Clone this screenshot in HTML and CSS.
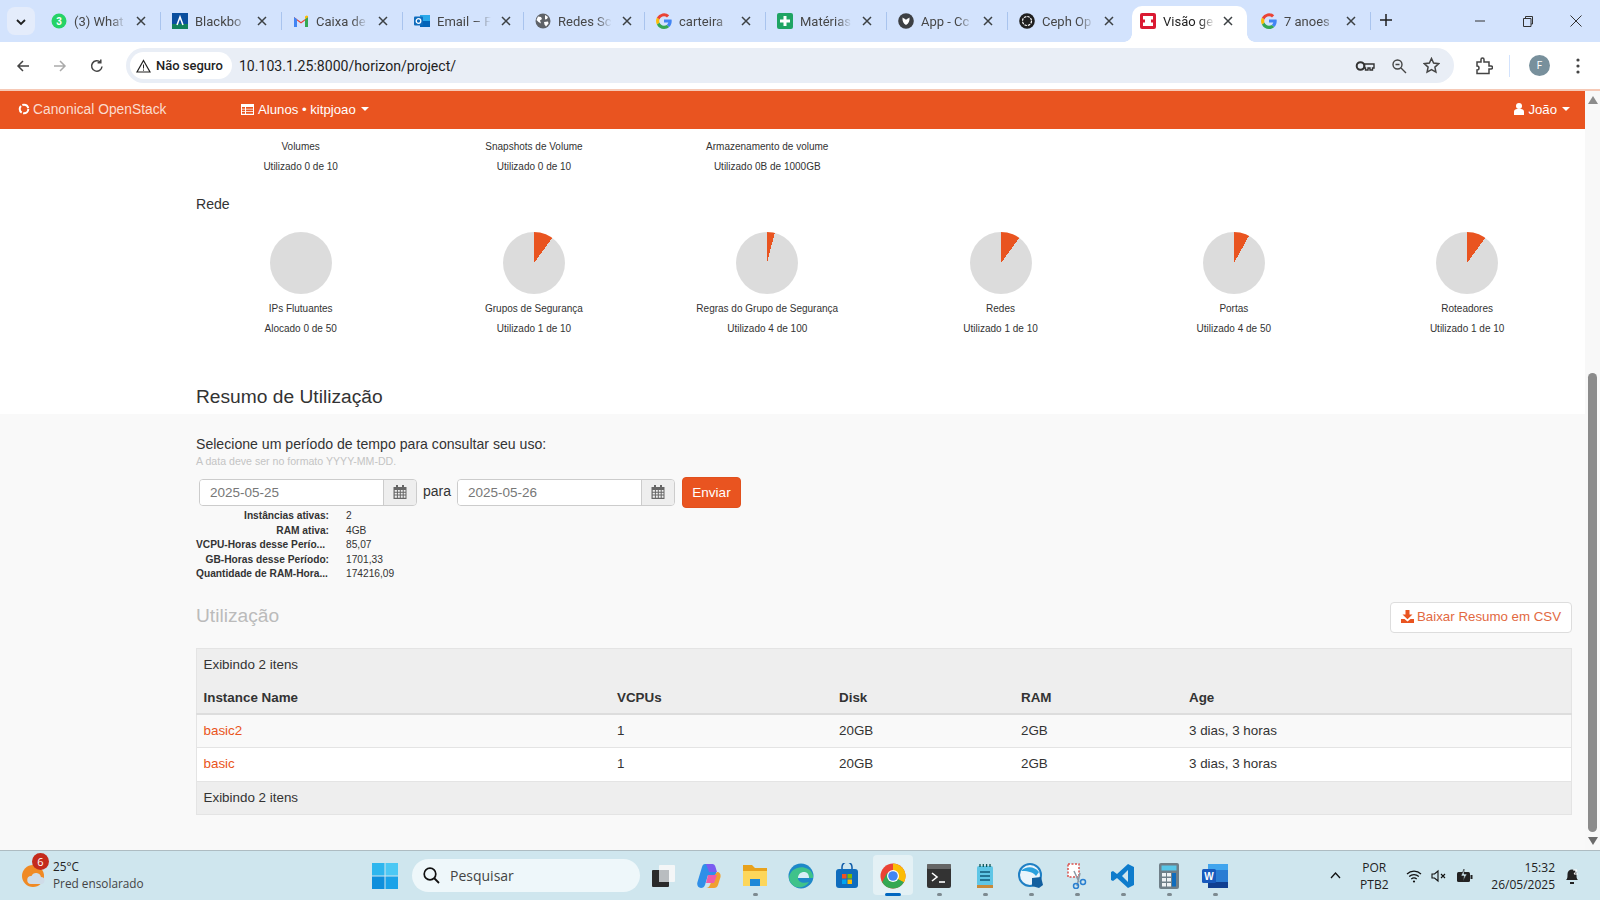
FILE: index.html
```html
<!DOCTYPE html>
<html lang="pt-BR">
<head>
<meta charset="UTF-8" />
<title>Visão geral - OpenStack Dashboard</title>
<link rel="stylesheet" href="styles.css">
</head>
<body>
<svg class="defs" width="0" height="0">
  <symbol id="i-close" viewBox="0 0 10 10"><path d="M1 1l8 8M9 1l-8 8" fill="none" stroke="#3c4043" stroke-width="1.5"/></symbol>
  <symbol id="i-cal" viewBox="0 0 14 14"><path fill="#666" d="M3 0h2v2h4V0h2v2h2.5v12H.5V2H3zM1.7 5v1.8h2.2V5zm3.2 0v1.8h1.9V5zm2.9 0v1.8h1.9V5zm2.9 0v1.8h1.8V5zM1.7 7.7v1.9h2.2V7.7zm3.2 0v1.9h1.9V7.7zm2.9 0v1.9h1.9V7.7zm2.9 0v1.9h1.8V7.7zM1.7 10.5v2.2h2.2v-2.2zm3.2 0v2.2h1.9v-2.2zm2.9 0v2.2h1.9v-2.2zm2.9 0v2.2h1.8v-2.2z"/></symbol>
  <symbol id="i-g" viewBox="0 0 16 16"><path fill="#4285f4" d="M15.7 8.2c0-.6 0-1.100-.2-1.600H8v3h4.300a3.700 3.700 0 0 1-1.600 2.400l2.500 2c1.500-1.400 2.500-3.400 2.500-5.800z"/><path fill="#34a853" d="M8 16c2.200 0 4-.7 5.200-2l-2.500-2c-.7.5-1.600.8-2.700.8-2.100 0-3.900-1.400-4.500-3.300L.9 11.500A8 8 0 0 0 8 16z"/><path fill="#fbbc05" d="M3.500 9.500a4.800 4.800 0 0 1 0-3L.9 4.500a8 8 0 0 0 0 7z"/><path fill="#ea4335" d="M8 3.200c1.200 0 2.200.4 3 1.200l2.200-2.200A8 8 0 0 0 .9 4.500l2.600 2C4.100 4.600 5.900 3.200 8 3.200z"/></symbol>
</svg>

<div class="window">
  <header class="tabstrip">
    <button class="tab-search"><svg width="10" height="7" viewBox="0 0 10 7"><path d="M1 1l4 4 4-4" fill="none" stroke="#1f1f1f" stroke-width="1.800"/></svg></button>
    <div class="tab">
      <svg class="fav" viewBox="0 0 16 16"><circle cx="8" cy="8" r="7.500" fill="#25d366"/><text x="8" y="11.500" class="fav-num">3</text></svg>
      <span class="tab-title">(3) What</span><svg class="tab-x"><use href="#i-close"/></svg>
    </div>
    <div class="tab">
      <svg class="fav" viewBox="0 0 16 16"><rect width="16" height="16" fill="#0a4f9e"/><path d="M0 11h16v5H0z" fill="#10805a"/><path d="M5 12l3-8 3 8" fill="none" stroke="#fff" stroke-width="1.500"/></svg>
      <span class="tab-title">Blackbo</span><svg class="tab-x"><use href="#i-close"/></svg>
    </div>
    <div class="tab">
      <svg class="fav" viewBox="0 0 16 16"><path d="M1 14V4l7 5 7-5v10h-3V7.500L8 10.500 4 7.500V14z" fill="#ea4335"/><path d="M1 14V4l3 2.300V14z" fill="#4285f4"/><path d="M15 14V4l-3 2.300V14z" fill="#34a853"/><path d="M12 6.300L15 4v-1l-1.500-.5L12 3.500z" fill="#fbbc05"/></svg>
      <span class="tab-title">Caixa de</span><svg class="tab-x"><use href="#i-close"/></svg>
    </div>
    <div class="tab">
      <svg class="fav" viewBox="0 0 16 16"><rect x="6" y="2" width="10" height="12" fill="#28a8ea"/><rect x="6" y="8" width="10" height="6" fill="#0364b8"/><rect y="3.500" width="9" height="9" rx="1" fill="#0f6cbd"/><circle cx="4.500" cy="8" r="2.300" fill="none" stroke="#fff" stroke-width="1.300"/></svg>
      <span class="tab-title">Email – F</span><svg class="tab-x"><use href="#i-close"/></svg>
    </div>
    <div class="tab">
      <svg class="fav" viewBox="0 0 16 16"><circle cx="8" cy="8" r="7.500" fill="#5f6368"/><path d="M3 3.500l3 .5 1 2-2 1.500 1 3-2.500-1.500L1.500 7zM10 2l3 2-1 2-2 .5zM9 9l4-.5.5 2-2.500 3-1.500-2z" fill="#fff"/></svg>
      <span class="tab-title">Redes Sc</span><svg class="tab-x"><use href="#i-close"/></svg>
    </div>
    <div class="tab">
      <svg class="fav"><use href="#i-g"/></svg>
      <span class="tab-title">carteira</span><svg class="tab-x"><use href="#i-close"/></svg>
    </div>
    <div class="tab">
      <svg class="fav" viewBox="0 0 16 16"><rect width="16" height="16" rx="2" fill="#1fa463"/><path d="M6.500 3h3v3.500H13v3H9.500V13h-3V9.500H3v-3h3.500z" fill="#fff"/></svg>
      <span class="tab-title">Matérias</span><svg class="tab-x"><use href="#i-close"/></svg>
    </div>
    <div class="tab">
      <svg class="fav" viewBox="0 0 16 16"><circle cx="8" cy="8" r="7.800" fill="#3c3f43"/><path d="M4.500 4.500C6 5.500 7.500 6 8 7c.5-1 2-1.500 3.500-2.500.3 3.500-.8 6-3.500 7.500-2.700-1.500-3.800-4-3.500-7.500z" fill="#fff"/></svg>
      <span class="tab-title">App - Cc</span><svg class="tab-x"><use href="#i-close"/></svg>
    </div>
    <div class="tab">
      <svg class="fav" viewBox="0 0 16 16"><circle cx="8" cy="8" r="7.800" fill="#1f1f1f"/><circle cx="8" cy="8" r="4.500" fill="none" stroke="#fff" stroke-width="1.200" stroke-dasharray="2.500 1"/></svg>
      <span class="tab-title">Ceph Op</span><svg class="tab-x"><use href="#i-close"/></svg>
    </div>
    <div class="tab is-active">
      <svg class="fav" viewBox="0 0 16 16"><rect width="16" height="16" rx="2" fill="#da1a32"/><rect x="3" y="3" width="10" height="10" fill="#fff"/><path d="M0 6.500h5v3H0zM11 6.500h5v3h-5z" fill="#da1a32"/></svg>
      <span class="tab-title">Visão ge</span><svg class="tab-x"><use href="#i-close"/></svg>
    </div>
    <div class="tab">
      <svg class="fav"><use href="#i-g"/></svg>
      <span class="tab-title">7 anoes</span><svg class="tab-x"><use href="#i-close"/></svg>
    </div>
    <button class="tab-new"><svg width="12" height="12" viewBox="0 0 12 12"><path d="M6 0v12M0 6h12" stroke="#1f1f1f" stroke-width="1.500"/></svg></button>
    <div class="win-controls">
      <svg width="12" height="12" viewBox="0 0 12 12"><path d="M1 6h10" stroke="#333" stroke-width="1"/></svg>
      <svg width="12" height="12" viewBox="0 0 12 12"><path d="M1.500 3.500h7.500v8H1.500zM3.500 3.500V1.500h7v7.500H9" fill="none" stroke="#333" stroke-width="1"/></svg>
      <svg width="12" height="12" viewBox="0 0 12 12"><path d="M.5.500l11 11M11.500.500l-11 11" stroke="#333" stroke-width="1"/></svg>
    </div>
  </header>

  <div class="toolbar">
    <svg class="nav-btn" viewBox="0 0 16 16"><path d="M14 8H3M8 3L3 8l5 5" fill="none" stroke="#444" stroke-width="1.500"/></svg>
    <svg class="nav-btn" viewBox="0 0 16 16"><path d="M2 8h11M8 3l5 5-5 5" fill="none" stroke="#aaa" stroke-width="1.500"/></svg>
    <svg class="nav-btn" viewBox="0 0 16 16"><path d="M13 8.500A5.200 5.200 0 1 1 11.500 4.300M11.800 1.500v3.200H8.600" fill="none" stroke="#444" stroke-width="1.500"/></svg>
    <div class="omnibox">
      <span class="chip"><svg width="15" height="14" viewBox="0 0 15 14"><path d="M7.500 1.500L14 13H1z" fill="none" stroke="#222" stroke-width="1.200"/><path d="M7.500 5.500v4M7.500 10.500v1.200" stroke="#222" stroke-width="1"/></svg>Não seguro</span>
      <span class="url">10.103.1.25:8000/horizon/project/</span>
      <svg class="omni-icon" width="20" height="14" viewBox="0 0 20 14"><circle cx="5.500" cy="7" r="3.800" fill="none" stroke="#333" stroke-width="2"/><path d="M9.500 5h9.500v4h-1.500v2h-2.500V9H13v2h-2.500V9h-1z" fill="none" stroke="#333" stroke-width="1.400"/></svg>
      <svg class="omni-icon" width="16" height="16" viewBox="0 0 16 16"><circle cx="6.500" cy="6.500" r="4.500" fill="none" stroke="#444" stroke-width="1.400"/><path d="M10 10l5 5M4.500 6.500h4" stroke="#444" stroke-width="1.400"/></svg>
      <svg class="omni-icon" width="17" height="17" viewBox="0 0 17 17"><path d="M8.500 1.500l2.100 4.600 5 .6-3.700 3.400 1 5-4.400-2.500-4.400 2.500 1-5L1.400 6.700l5-.6z" fill="none" stroke="#444" stroke-width="1.500"/></svg>
    </div>
    <svg class="ext-icon" width="18" height="18" viewBox="0 0 18 18"><path d="M2 5h4V2.500a1.500 1.500 0 0 1 3 0V5h5v4h2a1.500 1.500 0 0 1 0 3h-2v4.500H2V13a2 2 0 0 0 0-4z" fill="none" stroke="#444" stroke-width="1.500"/></svg>
    <span class="tb-sep"></span>
    <span class="avatar">F</span>
    <svg class="menu-dots" width="4" height="16" viewBox="0 0 4 16"><circle cx="2" cy="2" r="1.600" fill="#444"/><circle cx="2" cy="8" r="1.600" fill="#444"/><circle cx="2" cy="14" r="1.600" fill="#444"/></svg>
  </div>

  <div class="viewport">
    <div class="page">
      <nav class="navbar">
        <span class="brand"><svg width="12" height="12" viewBox="0 0 12 12"><circle cx="6" cy="6" r="4.300" fill="none" stroke="#fff" stroke-width="2" stroke-dasharray="7.500 1.500"/></svg>Canonical OpenStack</span>
        <span class="project"><svg width="13" height="11" viewBox="0 0 13 11"><path fill="#fff" d="M0 0h13v11H0zm1 3v1.700h3V3zm4 0v1.700h7V3zM1 5.500v1.700h3V5.500zm4 0v1.700h7V5.500zM1 8v1.800h3V8zm4 0v1.800h7V8z"/></svg>Alunos • kitpjoao<i class="caret"></i></span>
        <span class="user"><svg width="10" height="12" viewBox="0 0 10 12"><circle cx="5" cy="3" r="3" fill="#fff"/><path d="M0 12V8.500C0 7 1.500 6 3 6h4c1.500 0 3 1 3 2.500V12z" fill="#fff"/></svg>João<i class="caret"></i></span>
      </nav>

      <section class="quota">
        <div class="quota-row">
          <div class="quota-item"><div>Volumes</div><div>Utilizado 0 de 10</div></div>
          <div class="quota-item"><div>Snapshots de Volume</div><div>Utilizado 0 de 10</div></div>
          <div class="quota-item"><div>Armazenamento de volume</div><div>Utilizado 0B de 1000GB</div></div>
        </div>
        <h3 class="quota-title">Rede</h3>
        <div class="quota-row">
          <div class="quota-item"><div class="pie" style="--used:0%"></div><div>IPs Flutuantes</div><div>Alocado 0 de 50</div></div>
          <div class="quota-item"><div class="pie" style="--used:10%"></div><div>Grupos de Segurança</div><div>Utilizado 1 de 10</div></div>
          <div class="quota-item"><div class="pie" style="--used:4%"></div><div>Regras do Grupo de Segurança</div><div>Utilizado 4 de 100</div></div>
          <div class="quota-item"><div class="pie" style="--used:10%"></div><div>Redes</div><div>Utilizado 1 de 10</div></div>
          <div class="quota-item"><div class="pie" style="--used:8%"></div><div>Portas</div><div>Utilizado 4 de 50</div></div>
          <div class="quota-item"><div class="pie" style="--used:10%"></div><div>Roteadores</div><div>Utilizado 1 de 10</div></div>
        </div>
        <h2 class="usage-title">Resumo de Utilização</h2>
      </section>

      <section class="usage">
        <p class="usage-lead">Selecione um período de tempo para consultar seu uso:</p>
        <p class="usage-hint">A data deve ser no formato YYYY-MM-DD.</p>
        <form class="date-form">
          <div class="date-group"><span class="date-input">2025-05-25</span><span class="date-addon"><svg width="14" height="14"><use href="#i-cal"/></svg></span></div>
          <span class="date-to">para</span>
          <div class="date-group"><span class="date-input">2025-05-26</span><span class="date-addon"><svg width="14" height="14"><use href="#i-cal"/></svg></span></div>
          <button class="btn-submit" type="button">Enviar</button>
        </form>
        <dl class="stats">
          <dt>Instâncias ativas:</dt><dd>2</dd>
          <dt>RAM ativa:</dt><dd>4GB</dd>
          <dt class="cut">VCPU-Horas desse Perío...</dt><dd>85,07</dd>
          <dt>GB-Horas desse Período:</dt><dd>1701,33</dd>
          <dt class="cut">Quantidade de RAM-Hora...</dt><dd>174216,09</dd>
        </dl>
        <div class="usage-head">
          <h3>Utilização</h3>
          <button class="btn-csv" type="button"><svg width="13" height="13" viewBox="0 0 13 13"><path fill="#e95420" d="M4.500 0h4v4.500h3L6.500 9.200 1.500 4.500h3zM0 9h3.500l3 2.500 3-2.500H13v4H0z"/></svg>Baixar Resumo em CSV</button>
        </div>
        <table class="usage-table">
          <colgroup>
            <col class="col-name"><col class="col-vcpu"><col class="col-disk"><col class="col-ram"><col>
          </colgroup>
          <thead>
            <tr class="bar-row"><th colspan="5">Exibindo 2 itens</th></tr>
            <tr class="head-row"><th>Instance Name</th><th>VCPUs</th><th>Disk</th><th>RAM</th><th>Age</th></tr>
          </thead>
          <tbody>
            <tr class="odd"><td><a href="#">basic2</a></td><td>1</td><td>20GB</td><td>2GB</td><td>3 dias, 3 horas</td></tr>
            <tr><td><a href="#">basic</a></td><td>1</td><td>20GB</td><td>2GB</td><td>3 dias, 3 horas</td></tr>
          </tbody>
          <tfoot>
            <tr class="bar-row"><td colspan="5">Exibindo 2 itens</td></tr>
          </tfoot>
        </table>
      </section>
    </div>
    <aside class="scrollbar">
      <i class="sb-up"></i>
      <div class="sb-track"><div class="sb-thumb"></div></div>
      <i class="sb-down"></i>
    </aside>
  </div>

  <footer class="taskbar">
    <div class="weather">
      <svg class="weather-icon" width="26" height="28" viewBox="0 0 26 28"><circle cx="12" cy="14" r="11" fill="#f08a24"/><path d="M10 22a4 4 0 0 1 .5-8 5 5 0 0 1 9.500 1 3.500 3.500 0 0 1 0 7z" fill="#cfdce8"/></svg>
      <span class="weather-badge">6</span>
      <div class="weather-text"><div>25°C</div><div class="weather-sub">Pred ensolarado</div></div>
    </div>
    <div class="task">
      <svg width="26" height="26" viewBox="0 0 26 26"><path d="M0 0h12.500v12.500H0z" fill="#2fb6ee"/><path d="M13.500 0H26v12.500H13.500z" fill="#4cc8f4"/><path d="M0 13.500h12.500V26H0z" fill="#0f8fdc"/><path d="M13.500 13.500H26V26H13.500z" fill="#1aa2e8"/></svg>
    </div>
    <div class="search">
      <svg width="17" height="17" viewBox="0 0 17 17"><circle cx="7" cy="7" r="5.800" fill="none" stroke="#111" stroke-width="1.700"/><path d="M11 11l5 5" stroke="#111" stroke-width="1.800"/></svg>
      <span>Pesquisar</span>
    </div>
    <div class="task">
      <svg width="24" height="24" viewBox="0 0 24 24"><rect x="8" y="1" width="16" height="17" rx="1" fill="#f4f6f7"/><rect x="1" y="6" width="17" height="17" rx="1" fill="#2a2a2a"/><rect x="8" y="6" width="10" height="12" fill="#b9bdc0"/></svg>
    </div>
    <div class="task">
      <svg width="24" height="26" viewBox="0 0 24 26"><path d="M8 1h6c2 0 3 1 3.500 3L20 12H11L8 22c-.7 2-2 3-4 3-3 0-4.500-3-3.500-6L5 4c.5-2 1.500-3 3-3z" fill="#2f8fe8"/><path d="M9 1h6c2 0 3 1 3.500 3l1.500 5h-8z" fill="#7b5cf0"/><path d="M20 9c2.500 0 4 2 3.500 5L21 22c-.7 2-2 3-4 3H9c2 0 3-1 4-3l3-8z" fill="#f0a030"/><path d="M11 12h9l-3 8h-8z" fill="#ef5da8"/></svg>
    </div>
    <div class="task running">
      <svg width="26" height="24" viewBox="0 0 26 24"><path d="M1 1h9l3 3h12v18H1z" fill="#e8a21c"/><path d="M1 7h24v15H1z" fill="#fdd65a"/><rect x="8" y="15" width="10" height="7" fill="#1e88d8"/></svg>
    </div>
    <div class="task">
      <svg width="26" height="26" viewBox="0 0 26 26"><circle cx="13" cy="13" r="12.500" fill="#1e88c8"/><path d="M1 14C3 5 13 2 20 6c4 2 5.500 6 5 9H10c0 4 5 6 11 4-3 5-10 7-15 4-3-2-5-5-5-9z" fill="#3fc28a"/><path d="M10 15c0-4 3-6 6-6s5 2 5 6z" fill="#d8eef7"/></svg>
    </div>
    <div class="task">
      <svg width="24" height="26" viewBox="0 0 24 26"><path d="M7 7V4a5 5 0 0 1 10 0v3" fill="none" stroke="#0e5aa7" stroke-width="1.500"/><rect x="1" y="6" width="22" height="19" rx="3" fill="#0f6cbd"/><path d="M7 11h4.500v4.500H7z" fill="#f25022"/><path d="M12.500 11H17v4.500h-4.500z" fill="#7fba00"/><path d="M7 16.500h4.500V21H7z" fill="#00a4ef"/><path d="M12.500 16.500H17V21h-4.500z" fill="#ffb900"/></svg>
    </div>
    <div class="task is-open">
      <svg width="26" height="26" viewBox="0 0 26 26"><circle cx="13" cy="13" r="12.500" fill="#ea4335"/><path d="M13 13L24 19a12.500 12.500 0 0 1-21.800.3L7 10z" fill="#34a853"/><path d="M13 13l11 6A12.500 12.500 0 0 0 13 .5L13 7z" fill="#fbbc05"/><path d="M13 7h10.500A12.500 12.500 0 0 1 24 19l-6 -3z" fill="#fbbc05"/><circle cx="13" cy="13" r="6" fill="#fff"/><circle cx="13" cy="13" r="4.800" fill="#4285f4"/></svg>
    </div>
    <div class="task running">
      <svg width="24" height="24" viewBox="0 0 24 24"><rect width="24" height="24" rx="2" fill="#333"/><rect width="24" height="5" rx="1" fill="#666"/><path d="M5 9l5 4-5 4" fill="none" stroke="#fff" stroke-width="1.600"/><path d="M12 18h6" stroke="#fff" stroke-width="1.600"/></svg>
    </div>
    <div class="task running">
      <svg width="18" height="26" viewBox="0 0 18 26"><rect x="1" y="3" width="16" height="20" rx="2" fill="#5fc6e6"/><rect x="1" y="22" width="16" height="3" fill="#c88a3a"/><path d="M4 9h10M4 13h10M4 17h10" stroke="#125a7a" stroke-width="1.500"/><path d="M4 1v3M7.300 1v3M10.600 1v3M14 1v3" stroke="#155" stroke-width="1.300"/></svg>
    </div>
    <div class="task running">
      <svg width="26" height="26" viewBox="0 0 26 26"><circle cx="12" cy="12" r="11" fill="#eaf4fb" stroke="#1f7fc4" stroke-width="2"/><path d="M3 8c5-5 13-5 18 1l-3 4C14 8 8 8 3 8z" fill="#2aa0dd"/><path d="M14 15l9-1 2 8-4 3-7-2z" fill="#125f9f"/></svg>
    </div>
    <div class="task running">
      <svg width="24" height="26" viewBox="0 0 24 26"><rect x="3" y="1" width="11" height="13" fill="#fff" stroke="#d9534f" stroke-width="1.500" stroke-dasharray="2 1.500"/><path d="M9 8l5 11M15 10l-3 13" stroke="#8b9aa6" stroke-width="1.500"/><circle cx="18" cy="19" r="2.500" fill="none" stroke="#2a7fd0" stroke-width="1.500"/><circle cx="11" cy="23" r="2.500" fill="none" stroke="#2a7fd0" stroke-width="1.500"/></svg>
    </div>
    <div class="task running">
      <svg width="24" height="26" viewBox="0 0 24 26"><path d="M17 1l6 3v18l-6 3-11-10-4 3-2-1V9l2-1 4 3z" fill="#0e7ccc"/><path d="M17 7l-6 6 6 6z" fill="#cfe6ee"/></svg>
    </div>
    <div class="task running">
      <svg width="20" height="26" viewBox="0 0 20 26"><rect width="20" height="26" rx="2" fill="#6f7f88"/><rect x="2.500" y="2.500" width="15" height="5" fill="#58c6e8"/><path d="M3 10h4v3.500H3zM8 10h4v3.500H8zM3 15h4v3.500H3zM8 15h4v3.500H8zM3 20h4v3.500H3zM8 20h4v3.500H8z" fill="#eef2f4"/><path d="M13 10h4v13.500h-4z" fill="#0f6cbd"/></svg>
    </div>
    <div class="task running">
      <svg width="26" height="24" viewBox="0 0 26 24"><rect x="6" y="0" width="20" height="24" rx="2" fill="#2b7cd3"/><path d="M6 0h20v6H6z" fill="#41a5ee"/><path d="M6 18h20v6H6z" fill="#103f91"/><rect y="5" width="14" height="14" rx="1.500" fill="#185abd"/><text x="7" y="16" class="word-w">W</text></svg>
    </div>

    <div class="tray">
      <svg class="tray-up" width="11" height="7" viewBox="0 0 11 7"><path d="M1 6l4.500-5L10 6" fill="none" stroke="#111" stroke-width="1.300"/></svg>
      <div class="tray-lang"><div>POR</div><div>PTB2</div></div>
      <svg class="tray-wifi" width="16" height="14" viewBox="0 0 16 14"><path d="M1 5a10 10 0 0 1 14 0M3.200 7.500a7 7 0 0 1 9.600 0M5.300 10a4 4 0 0 1 5.400 0" fill="none" stroke="#111" stroke-width="1.200"/><circle cx="8" cy="12.500" r="1.100" fill="#111"/></svg>
      <svg width="16" height="14" viewBox="0 0 16 14"><path d="M1 5h2.500L7 2v10L3.500 9H1z" fill="none" stroke="#111" stroke-width="1.100"/><path d="M10 5l4 4M14 5l-4 4" stroke="#111" stroke-width="1.100"/></svg>
      <svg width="17" height="14" viewBox="0 0 17 14"><rect x="1" y="3" width="13" height="10" rx="1.500" fill="#222"/><rect x="14.500" y="6" width="2" height="4" fill="#222"/><path d="M8 0L5 7h3l-1 5 4-7H8z" fill="#cfe6ee" stroke="#222" stroke-width=".6"/></svg>
      <div class="tray-clock"><div>15:32</div><div>26/05/2025</div></div>
      <svg class="tray-bell" width="14" height="18" viewBox="0 0 14 18"><path d="M1 13c1.500-1 1.500-3 1.500-6a4.500 4.500 0 0 1 9 0c0 3 0 5 1.500 6z" fill="#222"/><rect x="5" y="15" width="4" height="2" fill="#222"/><path d="M8 3h4L9 7h4" fill="none" stroke="#fff" stroke-width="1"/></svg>
    </div>
  </footer>
</div>
</body>
</html>
```

FILE: styles.css
```css
* {
  box-sizing: border-box;
}

html, body {
  margin: 0;
  height: 100%;
  overflow: hidden;
}

body {
  font-family: "Liberation Sans", Arial, sans-serif;
  color: #333;
}

.defs {
  position: absolute;
}

.window {
  display: flex;
  flex-direction: column;
  width: 1600px;
  height: 900px;
}

/* browser chrome */
.tabstrip {
  display: flex;
  align-items: flex-end;
  flex: 0 0 42px;
  padding-left: 7px;
  background: #d3e3fd;
  font-family: Roboto, "Noto Sans", sans-serif;
}

.tab-search {
  flex: 0 0 28px;
  height: 28px;
  margin: 0 5px 7px 0;
  padding: 0;
  border: 0;
  border-radius: 8px;
  background: #e4ecfb;
}

.tab {
  position: relative;
  display: flex;
  align-items: center;
  flex: 0 0 121px;
  height: 36px;
  padding: 0 0 6px 11px;
  font-size: 13px;
  color: #474747;
}

.tab::after {
  content: "";
  position: absolute;
  right: 0;
  top: 6px;
  bottom: 12px;
  width: 1px;
  background: #a9c4ee;
}

.tab:nth-of-type(9)::after {
  display: none;
}

.tab.is-active {
  flex-basis: 115px;
  margin: 0 3px;
  padding-left: 8px;
  background: #fff;
  border-radius: 10px 10px 0 0;
  color: #1f1f1f;
}

.tab.is-active::before,
.tab.is-active::after {
  content: "";
  position: absolute;
  top: auto;
  bottom: 0;
  width: 8px;
  height: 8px;
}

.tab.is-active::before {
  left: -8px;
  background: radial-gradient(circle at 0 0, transparent 7.500px, #fff 8px);
}

.tab.is-active::after {
  right: -8px;
  background: radial-gradient(circle at 100% 0, transparent 7.500px, #fff 8px);
}

.tab.is-active .tab-x {
  margin-left: 8px;
}

.fav {
  flex: 0 0 16px;
  width: 16px;
  height: 16px;
}

.fav-num {
  font: bold 10px "Liberation Sans", sans-serif;
  fill: #fff;
  text-anchor: middle;
}

.tab-title {
  flex: 0 0 52px;
  margin-left: 7px;
  white-space: nowrap;
  -webkit-mask-image: linear-gradient(90deg, #000 70%, transparent 100%);
  mask-image: linear-gradient(90deg, #000 70%, transparent 100%);
}

.tab-x {
  width: 10px;
  height: 10px;
  margin-left: 10px;
}

.tab-new {
  align-self: center;
  width: 18px;
  height: 18px;
  margin: 0 0 0 6px;
  padding: 0;
  border: 0;
  background: none;
}

.win-controls {
  display: flex;
  align-items: center;
  gap: 36px;
  height: 42px;
  margin-left: auto;
  padding-right: 18px;
}

.toolbar {
  display: flex;
  align-items: center;
  flex: 0 0 47px;
  padding: 0 12px 0 15px;
  background: #fff;
  font-family: Roboto, "Noto Sans", sans-serif;
  border-radius: 8px 8px 0 0;
}

.nav-btn {
  width: 16px;
  height: 16px;
  margin-right: 21px;
}

.omnibox {
  display: flex;
  align-items: center;
  width: 1328px;
  height: 35px;
  padding: 0 14px 0 4px;
  border-radius: 18px;
  background: #e9eef6;
  color: #1f1f1f;
}

.chip {
  display: flex;
  align-items: center;
  gap: 5px;
  height: 27px;
  padding: 0 9px 0 6px;
  border-radius: 14px;
  background: #fff;
  font-size: 13px;
  font-weight: 500;
}

.url {
  margin-left: 7px;
  font-size: 14.100px;
  flex: 1;
}

.omni-icon {
  margin-left: 16px;
}

.ext-icon {
  margin-left: 21px;
}

.tb-sep {
  width: 1px;
  height: 22px;
  margin-left: 16px;
  background: #d3e3fd;
}

.avatar {
  width: 21px;
  height: 21px;
  margin-left: 19px;
  border-radius: 50%;
  background: #78909c;
  color: #fff;
  font-size: 10px;
  line-height: 21px;
  text-align: center;
}

.menu-dots {
  margin-left: 26px;
}

/* page viewport */
.viewport {
  display: flex;
  flex: 0 0 761px;
  height: 761px;
  border-top: 2px solid #f6c9b6;
  background: #f9f9f9;
}

.page {
  flex: 1;
  min-width: 0;
}

.navbar {
  display: flex;
  align-items: center;
  height: 38px;
  padding: 0 0 2px 18px;
  background: #e95420;
  color: #fff;
  font-size: 13.200px;
}

.brand {
  display: flex;
  align-items: center;
  gap: 3px;
  width: 223px;
  font-size: 13.800px;
  color: #fbdccf;
}

.project {
  display: flex;
  align-items: center;
  gap: 4px;
}

.user {
  display: flex;
  align-items: center;
  gap: 4px;
  margin-left: auto;
  padding-right: 15px;
}

.caret {
  width: 0;
  height: 0;
  margin-left: 1px;
  border: 4px solid transparent;
  border-top-color: #fff;
  border-bottom: 0;
}

.quota {
  height: 285px;
  padding: 8px 0 0 184px;
  background: #fff;
}

.quota-row {
  display: grid;
  grid-template-columns: repeat(6, 233.300px);
}

.quota-item {
  font-size: 10px;
  line-height: 20px;
  text-align: center;
  color: #333;
}

.pie {
  width: 62px;
  height: 62px;
  margin: 0 auto 5px;
  border-radius: 50%;
  background: conic-gradient(#e95420 0 var(--used), #dcdcdc 0);
}

.quota-title {
  margin: 17px 0 18px 12px;
  font-size: 14.100px;
  font-weight: 400;
  line-height: 20px;
}

.usage-title {
  margin: 45px 0 0 12px;
  font-size: 19.200px;
  font-weight: 400;
  line-height: 26px;
}

.usage {
  padding: 21px 12px 0 196px;
}

.usage-lead {
  margin: 0;
  font-size: 14.100px;
  line-height: 18px;
}

.usage-hint {
  margin: 1px 0 0;
  font-size: 10.600px;
  line-height: 14px;
  color: #c4c4c4;
}

.date-form {
  display: flex;
  align-items: center;
  margin: 8px 0 0 3px;
  height: 32px;
}

.date-group {
  display: flex;
  width: 218px;
  height: 27px;
  border: 1px solid #ccc;
  border-radius: 4px;
  overflow: hidden;
}

.date-input {
  flex: 1;
  padding-left: 10px;
  background: #fff;
  font-size: 13.500px;
  line-height: 25px;
  color: #777;
}

.date-addon {
  display: flex;
  align-items: center;
  justify-content: center;
  flex: 0 0 33px;
  background: #eee;
  border-left: 1px solid #ccc;
}

.date-to {
  width: 40px;
  font-size: 14px;
  text-align: center;
  padding-bottom: 2px;
}

.btn-submit {
  width: 59px;
  height: 31px;
  margin-left: 7px;
  padding: 0;
  border: 1px solid #e1501d;
  border-radius: 4px;
  background: #e95420;
  color: #fff;
  font: 13.500px "Liberation Sans", sans-serif;
}

.stats {
  display: grid;
  grid-template-columns: 133px auto;
  column-gap: 17px;
  justify-content: start;
  margin: 1px 0 0;
  font-size: 10.200px;
  line-height: 14.500px;
}

.stats dt {
  font-weight: 700;
  text-align: right;
  white-space: nowrap;
}

.stats dt.cut {
  text-align: left;
}

.stats dd {
  margin: 0;
}

.usage-head {
  display: flex;
  align-items: center;
  justify-content: space-between;
  margin-top: 20px;
  padding-right: 1px;
}

.usage-head h3 {
  margin: 0;
  padding-bottom: 2px;
  font-size: 19.200px;
  font-weight: 400;
  color: #bbb;
}

.btn-csv {
  display: flex;
  align-items: center;
  gap: 3px;
  width: 182px;
  height: 31px;
  padding: 0 0 1px 10px;
  border: 1px solid #ddd;
  border-radius: 4px;
  background: #fff;
  color: #e2693f;
  font: 13.300px "Liberation Sans", sans-serif;
}

.usage-table {
  width: 1376px;
  margin-top: 15px;
  table-layout: fixed;
  border-collapse: collapse;
  font-size: 13.400px;
  color: #333;
}

.usage-table th,
.usage-table td {
  padding: 0 6.500px;
  text-align: left;
}

.col-name { width: 414px; }
.col-vcpu { width: 222px; }
.col-disk { width: 182px; }
.col-ram { width: 168px; }

.bar-row th,
.bar-row td {
  height: 33px;
  background: #eee;
  font-weight: 400;
  border: 1px solid #e4e4e4;
}

.bar-row th {
  border-bottom: 0;
}

.head-row th {
  height: 33px;
  background: #eee;
  font-weight: 700;
  border-bottom: 2px solid #ddd;
}

.head-row th:first-child { border-left: 1px solid #e4e4e4; }
.head-row th:last-child { border-right: 1px solid #e4e4e4; }

.usage-table tbody td {
  height: 33.500px;
  padding-bottom: 2px;
  background: #fff;
  border-bottom: 1px solid #e4e4e4;
}

.usage-table tbody tr.odd td {
  background: #f9f9f9;
}

.usage-table tbody td:first-child { border-left: 1px solid #e4e4e4; }
.usage-table tbody td:last-child { border-right: 1px solid #e4e4e4; }

.usage-table a {
  color: #e95420;
  text-decoration: none;
}

.scrollbar {
  display: flex;
  flex-direction: column;
  align-items: center;
  flex: 0 0 15px;
  background: #f8f8f8;
}

.sb-track {
  flex: 1;
  width: 9px;
  padding-top: 264px;
}

.sb-thumb {
  height: 459px;
  border-radius: 5px;
  background: #8b8b8b;
}

.sb-up,
.sb-down {
  width: 0;
  height: 0;
  margin: 5px 0;
  border: 5px solid transparent;
}

.sb-up {
  border-top: 0;
  border-bottom: 8px solid #8b8b8b;
}

.sb-down {
  border-bottom: 0;
  border-top: 8px solid #6b6b6b;
}

/* windows taskbar */
.taskbar {
  display: flex;
  align-items: center;
  flex: 0 0 50px;
  background: #cfe6ee;
  border-top: 1px solid #aebcc2;
  font-family: "Open Sans", Roboto, sans-serif;
  color: #222;
}

.weather {
  position: relative;
  display: flex;
  align-items: center;
  flex: 0 0 362px;
  padding-left: 21px;
}

.weather-icon {
  flex: none;
}

.weather-badge {
  position: absolute;
  left: 32px;
  top: -5px;
  width: 17px;
  height: 17px;
  border-radius: 50%;
  background: #c42b1c;
  color: #fff;
  font-size: 11px;
  line-height: 17px;
  text-align: center;
}

.weather-text {
  margin-left: 6px;
  font-size: 11.800px;
  line-height: 17px;
  padding-bottom: 2px;
}

.weather-sub {
  color: #444;
}

.task {
  position: relative;
  display: flex;
  align-items: center;
  justify-content: center;
  flex: 0 0 46px;
  height: 49px;
}

.task.running::after {
  content: "";
  position: absolute;
  bottom: 4px;
  left: 21px;
  width: 5px;
  height: 3px;
  border-radius: 2px;
  background: #7d8a90;
}

.task.is-open::before {
  content: "";
  position: absolute;
  top: 4px;
  left: 3px;
  width: 40px;
  height: 40px;
  border-radius: 4px;
  background: #e4f1f5;
}

.task.is-open::after {
  content: "";
  position: absolute;
  bottom: 4px;
  left: 15px;
  width: 16px;
  height: 3px;
  border-radius: 2px;
  background: #0067c0;
}

.task svg {
  position: relative;
}

.word-w {
  font: bold 10px "Liberation Sans", sans-serif;
  fill: #fff;
  text-anchor: middle;
}

.search {
  display: flex;
  align-items: center;
  gap: 10px;
  flex: 0 0 228px;
  height: 33px;
  margin-left: 4px;
  padding-left: 11px;
  border-radius: 17px;
  background: #eef7fa;
  font-size: 14px;
  color: #444;
}

.tray {
  display: flex;
  align-items: center;
  margin-left: auto;
  padding-right: 21px;
  font-size: 12px;
  line-height: 17px;
}

.tray-up {
  margin-right: 17px;
}

.tray-lang {
  width: 32px;
  margin-right: 16px;
  text-align: center;
}

.tray svg + svg {
  margin-left: 9px;
}

.tray-clock {
  margin-left: 18px;
  text-align: right;
}

.tray-bell {
  margin-left: 10px;
}
```
